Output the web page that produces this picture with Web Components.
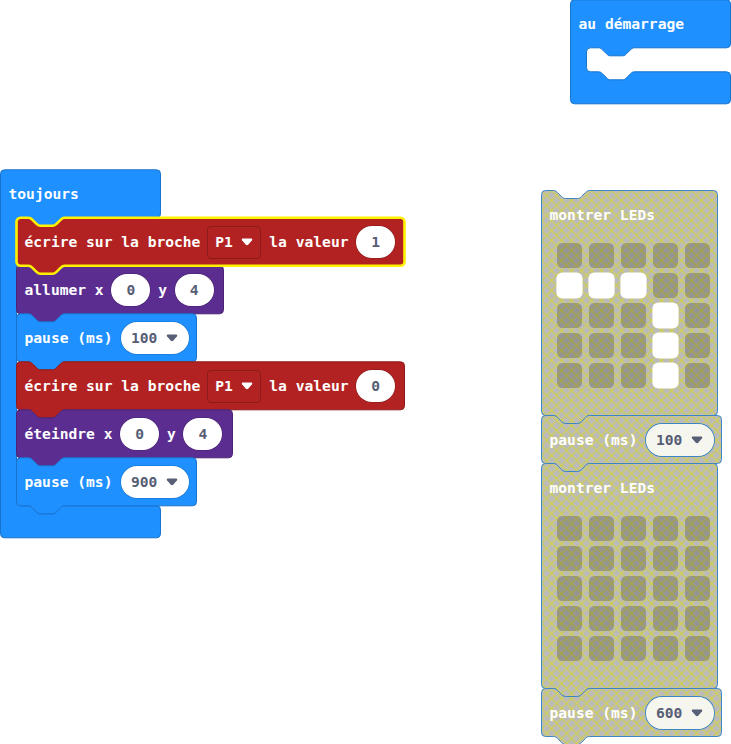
<!DOCTYPE html>
<html lang="fr">
<head>
<meta charset="utf-8">
<title>Blocs</title>
<style>
html,body{margin:0;width:731px;height:744px;overflow:hidden;background:#fff}
</style>
</head>
<body>
<block-canvas>
  <block-hat style="left:0;top:169px" label="toujours" inner="288">
    <code-block color="#b22222" edge="#8e1b1b" w="388" selected>
      <block-label>écrire sur la broche</block-label><pin-menu>P1</pin-menu><block-label>la valeur</block-label><value-pill>1</value-pill>
    </code-block>
    <code-block color="#5c2d91" edge="#4a2474" w="207">
      <block-label>allumer x</block-label><value-pill>0</value-pill><block-label>y</block-label><value-pill>4</value-pill>
    </code-block>
    <code-block color="#1e90ff" edge="#1873cc" w="180">
      <block-label>pause (ms)</block-label><value-pill menu>100</value-pill>
    </code-block>
    <code-block color="#b22222" edge="#8e1b1b" w="388">
      <block-label>écrire sur la broche</block-label><pin-menu>P1</pin-menu><block-label>la valeur</block-label><value-pill>0</value-pill>
    </code-block>
    <code-block color="#5c2d91" edge="#4a2474" w="216">
      <block-label>éteindre x</block-label><value-pill>0</value-pill><block-label>y</block-label><value-pill>4</value-pill>
    </code-block>
    <code-block color="#1e90ff" edge="#1873cc" w="180">
      <block-label>pause (ms)</block-label><value-pill menu>900</value-pill>
    </code-block>
  </block-hat>
  <block-hat style="left:570px;top:-1px" label="au démarrage" inner="24"></block-hat>
  <block-stack style="left:541px;top:190px">
    <code-block off w="176" h="225"><block-label>montrer LEDs</block-label><led-grid slot="grid" rows="00000 11100 00010 00010 00010"></led-grid></code-block>
    <code-block off w="180"><block-label>pause (ms)</block-label><value-pill menu off>100</value-pill></code-block>
    <code-block off w="176" h="225"><block-label>montrer LEDs</block-label><led-grid slot="grid" rows="00000 00000 00000 00000 00000"></led-grid></code-block>
    <code-block off w="180"><block-label>pause (ms)</block-label><value-pill menu off>600</value-pill></code-block>
  </block-stack>
</block-canvas>
<script>
const FONT = 'bold 14.62px/20px "DejaVu Sans Mono","Liberation Mono",monospace';
const NOTCH = 'c2 0 3 1 4 2l4 4c1 1 2 2 4 2h12c2 0 3-1 4-2l4-4c1-1 2-2 4-2';
const TAB = 'c-2 0-3 1-4 2l-4 4c-1 1-2 2-4 2h-12c-2 0-3-1-4-2l-4-4c-1-1-2-2-4-2';
const CARET = '<svg width="12" height="8" viewBox="0 0 12 8"><path d="M1.4.6h9.2q1.2.4.4 1.7L7.4 6.6q-1.4 1.2-2.8 0L1 2.3Q.2 1 1.4.6z" fill="currentColor"/></svg>';
let serial = 0;

class Base extends HTMLElement {
  connectedCallback() {
    if (!this.shadowRoot) this.attachShadow({mode: 'open'}).innerHTML = this.render();
  }
}

customElements.define('block-canvas', class extends Base {
  render() {
    return `<style>:host{display:block;position:relative;width:731px;height:744px;overflow:hidden;color:#fff;font:${FONT}}</style><slot></slot>`;
  }
});

customElements.define('block-stack', class extends Base {
  render() {
    return `<style>:host{position:absolute;display:flex;flex-direction:column;align-items:flex-start}</style><slot></slot>`;
  }
});

customElements.define('block-label', class extends Base {
  render() {
    return `<style>:host{display:block;white-space:nowrap;height:20px}</style><slot></slot>`;
  }
});

customElements.define('block-hat', class extends Base {
  render() {
    const inner = +this.getAttribute('inner'), b = 48 + inner, h = b + 32;
    const d = `M0 4a4 4 0 0 1 4-4H156a4 4 0 0 1 4 4V44a4 4 0 0 1-4 4H64${TAB}H20a4 4 0 0 0-4 4V${b - 4}a4 4 0 0 0 4 4h8${NOTCH}H156a4 4 0 0 1 4 4V${h - 4}a4 4 0 0 1-4 4H4a4 4 0 0 1-4-4z`;
    return `<style>:host{position:absolute;display:block;width:161px;height:${h}px}
      .shape{position:absolute;left:0;top:0;overflow:visible}
      .head{position:relative;height:48px;padding-left:8.5px;display:flex;align-items:center;box-sizing:border-box;padding-top:2px}
      .body{position:relative;margin-left:16px;display:flex;flex-direction:column;align-items:flex-start}</style>
      <svg class="shape" width="161" height="${h}"><path transform="translate(.5 .8)" d="${d}" fill="#1e90ff" stroke="#1873cc"/></svg>
      <div class="head"><span>${this.getAttribute('label')}</span></div><div class="body"><slot></slot></div>`;
  }
});

customElements.define('code-block', class extends Base {
  render() {
    const w = +this.getAttribute('w'), h = +(this.getAttribute('h') || 48);
    const off = this.hasAttribute('off'), sel = this.hasAttribute('selected'), id = 'hatch' + serial++;
    const d = `M0 4a4 4 0 0 1 4-4h8${NOTCH}H${w - 4}a4 4 0 0 1 4 4V${h - 4}a4 4 0 0 1-4 4H48${TAB}H4a4 4 0 0 1-4-4z`;
    const fill = off ? `url(#${id})` : this.getAttribute('color');
    const edge = off ? '#3c86c8' : this.getAttribute('edge');
    return `<style>:host{position:relative;display:block;width:${w}px;height:${h}px;z-index:${sel ? 2 : 1}}
      .shape{position:absolute;left:0;top:0;overflow:visible}
      .row{position:relative;height:48px;box-sizing:border-box;padding:2px 0 0 8.5px;display:flex;align-items:center;gap:8px}
      .row.led{padding-top:1px}</style>
      <svg class="shape" width="${w}" height="${h}">
      <defs><pattern id="${id}" patternUnits="userSpaceOnUse" width="10" height="10"><rect width="10" height="10" fill="#bbb"/><path d="M-1-1L11 11M11-1L-1 11M-1 1L1-1M9-1L11 1M-1 9L1 11M9 11L11 9" stroke="#d4d43c" stroke-width="1.1"/></pattern></defs>
      <g transform="translate(.5 ${off ? .5 : .8})"><path d="${d}" fill="${fill}" stroke="${edge}"/>
      ${sel ? `<path d="${d}" fill="none" stroke="#fff200" stroke-width="2.6"/>` : ''}</g></svg>
      <div class="row${h > 48 ? ' led' : ''}"><slot></slot></div><slot name="grid"></slot>`;
  }
});

customElements.define('value-pill', class extends Base {
  render() {
    const menu = this.hasAttribute('menu'), off = this.hasAttribute('off');
    return `<style>:host{display:flex;align-items:center;box-sizing:border-box;width:${menu ? 68 : 39}px;height:${off ? 32 : 31.5}px;border-radius:16px;
      justify-content:${menu ? 'flex-start' : 'center'};padding-left:${menu ? 10 : 0}px;gap:8.5px;margin-left:${menu ? .5 : 0}px;
      background:${off ? 'rgba(255,255,255,.84)' : '#fff'};color:#575e75;box-shadow:0 0 0 ${off ? '1px #3c86c8' : '.5px rgba(0,0,0,.25)'}}
      :host(:not([menu])){margin-left:-.4px}
      span{height:20px}</style><span><slot></slot></span>${menu ? CARET : ''}`;
  }
});

customElements.define('pin-menu', class extends Base {
  render() {
    return `<style>:host{display:flex;align-items:center;box-sizing:border-box;width:54px;height:33px;border:1px solid #8e1b1b;border-radius:4px;padding-left:7px;gap:8px;margin-left:-1.1px}
      span{height:20px}</style><span><slot></slot></span>${CARET}`;
  }
});

customElements.define('led-grid', class extends Base {
  render() {
    const cells = this.getAttribute('rows').replace(/ /g, '').split('').map(c => `<i class="${c === '1' ? 'on' : ''}"></i>`).join('');
    return `<style>:host{position:relative;display:grid;grid-template-columns:repeat(5,25px);grid-auto-rows:25px;column-gap:7px;row-gap:5px;margin:5px 0 0 16px}
      i{border-radius:5.5px;background:rgba(0,0,0,.2)}
      .on{background:#fff;box-shadow:0 0 0 .6px #fff}</style>${cells}`;
  }
});
</script>
</body>
</html>
